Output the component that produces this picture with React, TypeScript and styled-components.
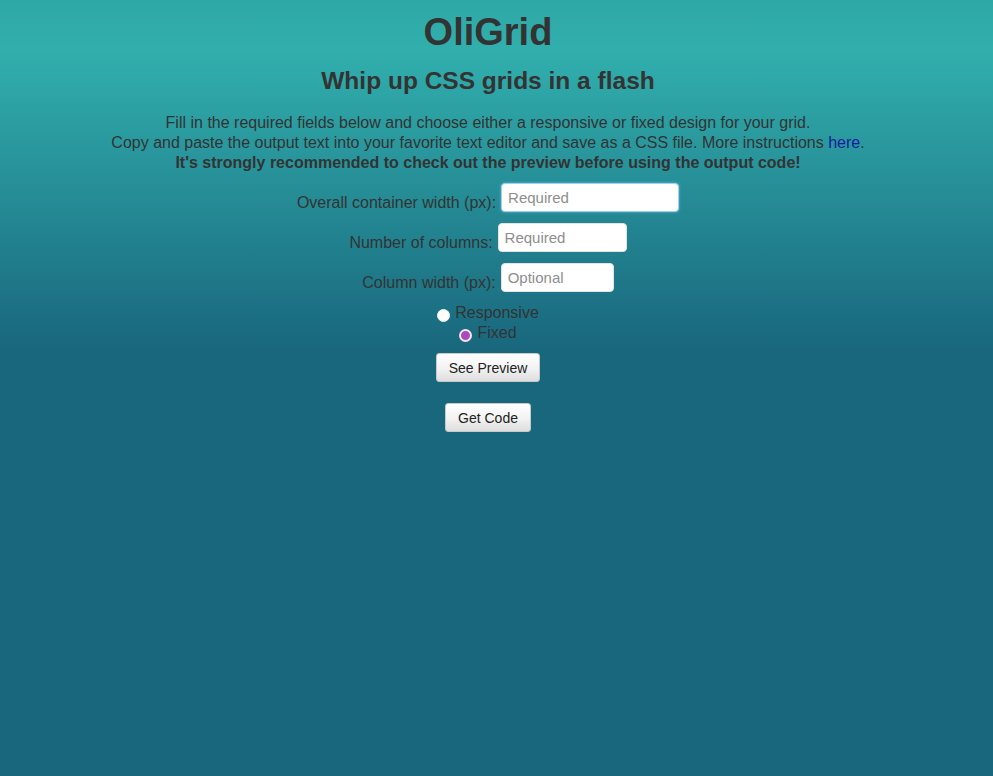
import React, { useState } from 'react';
import styled, { createGlobalStyle } from 'styled-components';

const GlobalStyle = createGlobalStyle`
  html, body {
    margin: 0;
    padding: 0;
  }

  body {
    min-height: 100vh;
    background: linear-gradient(
      to bottom,
      #2ea8a7 0px,
      #31afad 50px,
      #19677d 350px,
      #19677d 100%
    );
    background-attachment: fixed;
    font-family: 'Liberation Sans', Arial, sans-serif;
    color: #333333;
  }
`;

/* right padding keeps the column where the scrollbar gutter would leave it */
const Page = styled.main`
  display: flex;
  flex-direction: column;
  align-items: center;
  text-align: center;
  padding: 10px 17px 40px 0;
`;

const Title = styled.h1`
  margin: 0;
  font-size: 38px;
  font-weight: 700;
  line-height: 44px;
`;

const Subtitle = styled.h2`
  margin: 13px 0 0;
  font-size: 24.5px;
  font-weight: 700;
  line-height: 28px;
`;

const Intro = styled.p`
  margin: 18px 0 0;
  font-size: 16px;
  line-height: 20px;
`;

const Link = styled.a`
  color: #0e1c9e;
  text-decoration: none;
`;

const Form = styled.form`
  display: flex;
  flex-direction: column;
  align-items: center;
  margin-top: 10px;
`;

const Field = styled.div`
  display: flex;
  align-items: flex-end;
  gap: 5px;
  margin-bottom: 11px;
`;

const Label = styled.label`
  font-size: 16px;
  line-height: 18px;
`;

const Input = styled.input<{ $width: number; $active?: boolean }>`
  box-sizing: border-box;
  width: ${({ $width }) => $width}px;
  height: 29px;
  padding: 0 6px;
  border: 1px solid ${({ $active }) => ($active ? '#9fd0ee' : '#e4e4e4')};
  border-radius: 4px;
  background: #ffffff;
  box-shadow: ${({ $active }) =>
    $active ? '0 0 3px rgba(120, 190, 235, 0.8)' : 'none'};
  font-family: 'Liberation Sans', Arial, sans-serif;
  font-size: 15px;
  color: #333333;
  outline: none;

  &::placeholder {
    color: #8e8e8e;
  }
`;

const Choices = styled.div`
  display: flex;
  flex-direction: column;
  align-items: center;
`;

const Choice = styled.label`
  display: flex;
  align-items: center;
  gap: 5px;
  font-size: 16px;
  line-height: 20px;
`;

const Radio = styled.input`
  appearance: none;
  box-sizing: border-box;
  width: 13px;
  height: 13px;
  margin: 4px 0 0;
  border-radius: 50%;
  background: #ffffff;
  border: 1px solid #f4f4f4;

  &:checked {
    background: #a94bc0;
    border: 2px solid #f3e6f7;
  }
`;

const Actions = styled.div`
  display: flex;
  flex-direction: column;
  align-items: center;
  gap: 21px;
  margin-top: 10px;
`;

const Button = styled.button`
  box-sizing: border-box;
  height: 29px;
  padding: 0 12px;
  border: 1px solid #c9c9c9;
  border-radius: 3px;
  background: linear-gradient(to bottom, #ffffff 0%, #f2f2f2 55%, #dedede 100%);
  font-family: 'Liberation Sans', Arial, sans-serif;
  font-size: 14px;
  color: #222222;
  cursor: pointer;
`;

export default function App() {
  const [layout, setLayout] = useState<'responsive' | 'fixed'>('fixed');

  return (
    <>
      <GlobalStyle />
      <Page>
        <Title>OliGrid</Title>
        <Subtitle>Whip up CSS grids in a flash</Subtitle>
        <Intro>
          Fill in the required fields below and choose either a responsive or fixed design for your grid.
          <br />
          Copy and paste the output text into your favorite text editor and save as a CSS file. More
          instructions <Link href="#instructions">here</Link>.
          <br />
          <strong>It's strongly recommended to check out the preview before using the output code!</strong>
        </Intro>

        <Form onSubmit={(e) => e.preventDefault()}>
          <Field>
            <Label htmlFor="container">Overall container width (px):</Label>
            <Input id="container" $width={178} $active placeholder="Required" />
          </Field>
          <Field>
            <Label htmlFor="columns">Number of columns:</Label>
            <Input id="columns" $width={129} placeholder="Required" />
          </Field>
          <Field>
            <Label htmlFor="colwidth">Column width (px):</Label>
            <Input id="colwidth" $width={113} placeholder="Optional" />
          </Field>

          <Choices>
            <Choice>
              <Radio
                type="radio"
                name="layout"
                checked={layout === 'responsive'}
                onChange={() => setLayout('responsive')}
              />
              Responsive
            </Choice>
            <Choice>
              <Radio
                type="radio"
                name="layout"
                checked={layout === 'fixed'}
                onChange={() => setLayout('fixed')}
              />
              Fixed
            </Choice>
          </Choices>

          <Actions>
            <Button type="button">See Preview</Button>
            <Button type="button">Get Code</Button>
          </Actions>
        </Form>
      </Page>
    </>
  );
}
